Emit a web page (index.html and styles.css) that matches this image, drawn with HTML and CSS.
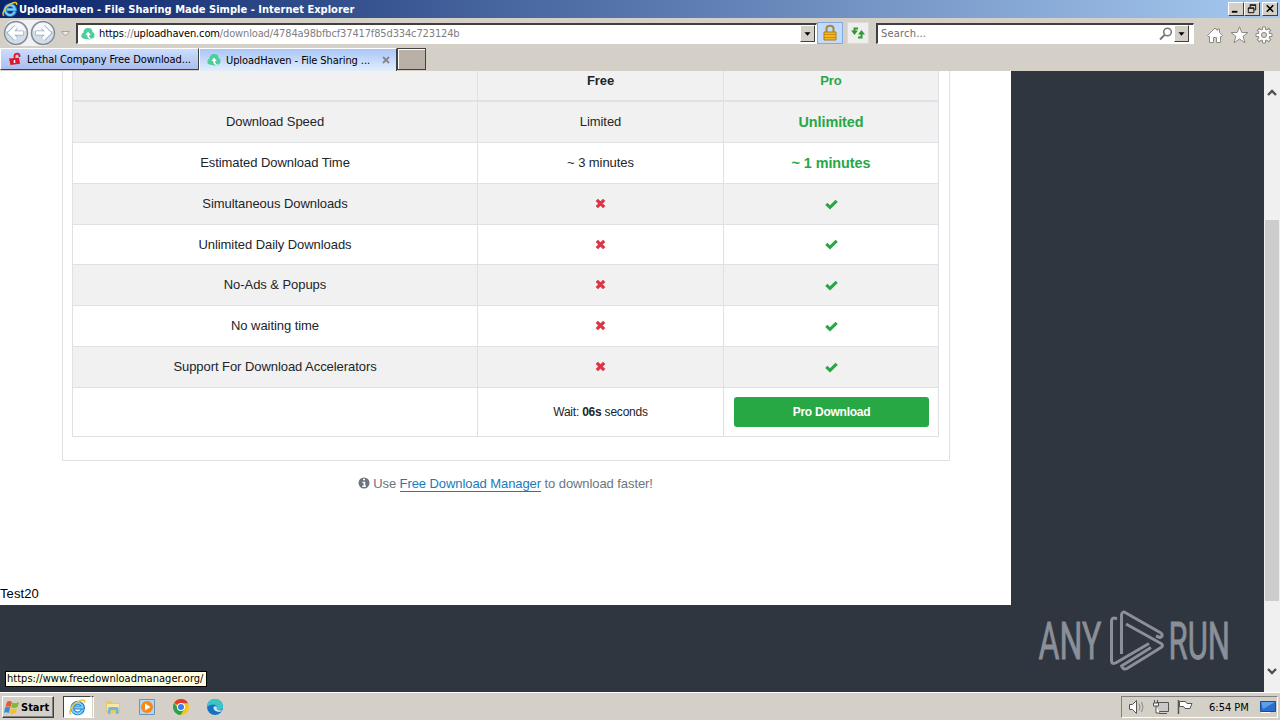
FILE: index.html
```html
<!DOCTYPE html>
<html lang="en">
<head>
    <meta charset="UTF-8">
    <title>UploadHaven - File Sharing Made Simple</title>
    <link rel="stylesheet" href="styles.css">
</head>
<body>
    <!-- shared icons -->
    <svg class="defs" width="0" height="0">
        <symbol id="ie" viewBox="0 0 16 16">
            <path d="M13 10.500A5 5 0 1 1 13.200 8.500H5" fill="none" stroke="#2580cc" stroke-width="3.6"/>
            <path d="M12.800 10.600A5 5 0 1 1 13 8.500H5" fill="none" stroke="#7fd0f8" stroke-width="1.8"/>
            <path d="M2.200 14.600C-1 14 2.500 6 8 3.200C12 .8 15.400.6 14.600 4" fill="none" stroke="#f2c230" stroke-width="1.500"/>
        </symbol>
        <symbol id="haven" viewBox="0 0 14 14">
            <path d="M1 11C-.5 8 1 6 2.500 5.500C2.500 2 5 .5 7.500 1C10.500 1 11.500 3 11.500 5C14 6 14 9.500 12.500 11L9 12.500L4 12Z" fill="#4ccf9c"/>
            <path d="M7 4.500L4.500 8H6.200C6.200 11 8 12.600 11 12C8.800 11 8.200 10 8.200 8H9.800Z" fill="#fff"/>
        </symbol>
        <symbol id="times" viewBox="0 0 11 11">
            <path d="M1.800 1.800L9.200 9.200M9.200 1.800L1.800 9.200" stroke="#dc3545" stroke-width="3.200" fill="none"/>
        </symbol>
        <symbol id="check" viewBox="0 0 13 11">
            <path d="M1.300 4.800L5 8.300L11.700 1.800" stroke="#28a745" stroke-width="3.100" fill="none"/>
        </symbol>
    </svg>

    <div class="titlebar">
        <svg class="title-icon"><use href="#ie"/></svg>
        <span class="title-text">UploadHaven - File Sharing Made Simple - Internet Explorer</span>
        <div class="window-buttons">
            <svg class="win-btn" viewBox="0 0 15 13"><path d="M3 9.500h6" stroke="#000" stroke-width="2"/></svg>
            <svg class="win-btn" viewBox="0 0 15 13"><path d="M5.500 5V2.500h6v5H10M5 2h7M3.500 5.500h6v5h-6zM3 5.500h7" stroke="#000" fill="none"/></svg>
            <svg class="win-btn close" viewBox="0 0 15 13"><path d="M4 2.500l7 7M11 2.500l-7 7" stroke="#000" stroke-width="1.700"/></svg>
        </div>
    </div>

    <div class="toolbar">
        <svg class="nav" viewBox="0 0 76 30">
            <path d="M15 2H43C59 2 59 28 43 28H15C0 28 0 2 15 2Z" fill="#f1f2f4"/>
            <g fill="#d3dde8" stroke="#848c96" stroke-width="1.500">
                <circle cx="16" cy="15" r="11.500"/>
                <circle cx="43" cy="15" r="11.500"/>
            </g>
            <path d="M6 13C8 2 24 2 26 13ZM33 13C35 2 51 2 53 13Z" fill="#f5f8fb"/>
            <path d="M23.500 15H10M16 9L10 15L16 21M35.500 15H49M43 9L49 15L43 21" stroke="#9aa8b8" stroke-width="5" fill="none"/>
            <path d="M23 15H10M16 9L10 15L16 21M36 15H49M43 9L49 15L43 21" stroke="#fff" stroke-width="3.400" fill="none"/>
            <path d="M61.500 13.500h8l-4 4.500z" fill="#ece9e4" stroke="#a9a49c"/>
        </svg>
        <div class="address">
            <svg class="site-icon"><use href="#haven"/></svg>
            <span class="url"><span class="dark">https</span>://<span class="dark">uploadhaven.com</span>/download/4784a98bfbcf37417f85d334c723124b</span>
            <svg class="drop" viewBox="0 0 15 17"><path d="M4 7h7l-3.500 4z"/></svg>
        </div>
        <div class="tool lock">
            <svg viewBox="0 0 16 18">
                <path d="M4.500 8V4.500C4.500 .8 11.500.8 11.500 4.500V8" fill="none" stroke="#a58a3c" stroke-width="2"/>
                <path d="M2 8h12v8H2z" fill="#f2b91e" stroke="#b07a10"/>
                <path d="M2 10.500h12M2 13.500h12" stroke="#ca8d14"/>
            </svg>
        </div>
        <div class="tool refresh">
            <svg viewBox="0 0 16 16">
                <path d="M8 3.500H4.500V7M8 12.500h3.500V9" fill="none" stroke="#2f9a35" stroke-width="2"/>
                <path d="M1 5.500h7l-3.500 4.500zM8 9.500h7L11.500 5z" fill="#2f9a35"/>
            </svg>
        </div>
        <div class="search">
            <span class="search-text">Search...</span>
            <svg class="lens" viewBox="0 0 14 14"><circle cx="8.500" cy="5" r="3.800" fill="none" stroke="#777" stroke-width="1.500"/><path d="M5.500 8L1 12.500" stroke="#777" stroke-width="2"/></svg>
            <svg class="drop" viewBox="0 0 15 17"><path d="M4 7h7l-3.500 4z"/></svg>
        </div>
        <svg class="commands" viewBox="0 0 68 20">
            <g fill="#fff" stroke="#8d8a86">
                <path d="M1.500 10.500L9 3l2.500 2.500V4h2v3.500l3 3l-1.500 1.500l-.5-.5V17.500H10.500V12.500H7.500V17.500H3.500V11.500L3 12Z"/>
                <path d="M33.500 1.800L35.800 7.500H42L37.100 11.300L39 17.700L33.500 14L28 17.700L29.900 11.300L25 7.500H31.200Z"/>
                <path d="M56.500 2h3v16h-3zM50 8.500h16v3H50z"/>
                <path d="M56.500 2h3v16h-3zM50 8.500h16v3H50z" transform="rotate(45 58 10)"/>
                <circle cx="58" cy="10" r="5.800"/>
                <path d="M57 3h2v14h-2zM51 9h14v2H51z" stroke="none"/>
                <path d="M57 3h2v14h-2zM51 9h14v2H51z" stroke="none" transform="rotate(45 58 10)"/>
                <circle cx="58" cy="10" r="2.600" fill="#d4d0c8"/>
            </g>
        </svg>
    </div>

    <div class="tabs">
        <div class="tab">
            <svg class="tab-icon" viewBox="0 0 14 14"><path d="M6.500 7V4C6.500 .8 11.500.8 11.500 4V5" fill="none" stroke="#e0182c" stroke-width="1.800"/><path d="M1 6.500l10-.8l1 6l-9.500 1.300z" fill="#e0182c"/><path d="M6.500 8v3" stroke="#fff" stroke-width="1.500"/></svg>
            <span class="tab-text">Lethal Company Free Download...</span>
        </div>
        <div class="tab active">
            <svg class="tab-icon"><use href="#haven"/></svg>
            <span class="tab-text">UploadHaven - File Sharing ...</span>
            <svg class="tab-close" viewBox="0 0 8 8"><path d="M1 1l6 6M7 1L1 7" stroke="#85858f" stroke-width="1.800"/></svg>
        </div>
        <div class="new-tab"></div>
    </div>

    <div class="viewport">
        <div class="page">
            <div class="content">
                <div class="card">
                    <table class="plans">
                        <colgroup><col class="col-name"><col class="col-free"><col class="col-pro"></colgroup>
                        <tr class="head"><th></th><th>Free</th><th class="green">Pro</th></tr>
                        <tr class="odd"><td>Download Speed</td><td>Limited</td><td class="pro">Unlimited</td></tr>
                        <tr><td>Estimated Download Time</td><td>~ 3 minutes</td><td class="pro">~ 1 minutes</td></tr>
                        <tr class="odd"><td>Simultaneous Downloads</td><td><svg class="times"><use href="#times"/></svg></td><td><svg class="check"><use href="#check"/></svg></td></tr>
                        <tr class="short"><td>Unlimited Daily Downloads</td><td><svg class="times"><use href="#times"/></svg></td><td><svg class="check"><use href="#check"/></svg></td></tr>
                        <tr class="odd"><td>No-Ads &amp; Popups</td><td><svg class="times"><use href="#times"/></svg></td><td><svg class="check"><use href="#check"/></svg></td></tr>
                        <tr><td>No waiting time</td><td><svg class="times"><use href="#times"/></svg></td><td><svg class="check"><use href="#check"/></svg></td></tr>
                        <tr class="odd"><td>Support For Download Accelerators</td><td><svg class="times"><use href="#times"/></svg></td><td><svg class="check"><use href="#check"/></svg></td></tr>
                        <tr class="last"><td></td><td class="wait">Wait: <b>06s</b> seconds</td><td><a class="btn">Pro Download</a></td></tr>
                    </table>
                </div>
                <p class="hint">
                    <svg class="info" viewBox="0 0 12 12"><circle cx="6" cy="6" r="5.500" fill="#6c757d"/><path d="M5 2.500h2M4.500 5.500H6.500V9M4.300 9.300h3.600" stroke="#fff" stroke-width="1.500" fill="none"/></svg>
                    <span>Use <a>Free Download Manager</a> to download faster!</span>
                </p>
                <div class="test">Test20</div>
            </div>
            <svg class="watermark" viewBox="0 0 196 66">
                <g class="mark-text">
                    <text transform="translate(.500 51.500) scale(.63 1)">ANY</text>
                    <text transform="translate(130.500 51.500) scale(.61 1)">RUN</text>
                </g>
                <g fill="none" stroke="#8b8f97" stroke-width="3" stroke-linejoin="round">
                    <path d="M79 12Q73.500 9 73.500 15V54Q74 58 78.500 55.500L111 36.500"/>
                    <path d="M83.500 47V8Q84 3.500 88 6L123 26Q126 29 122 30.500L118 29"/>
                    <path d="M88 17L123 36.500Q126 38.500 123 40.500L89 61.500Q85.500 63.500 83.500 59L113 40.500"/>
                </g>
            </svg>
            <div class="status">https://www.freedownloadmanager.org/</div>
        </div>
        <div class="scrollbar">
            <svg class="arrow" viewBox="0 0 16 16"><path d="M4 10l4-4l4 4" fill="none" stroke="#505050" stroke-width="2.400"/></svg>
            <div class="thumb"></div>
            <svg class="arrow" viewBox="0 0 16 16"><path d="M4 6l4 4l4-4" fill="none" stroke="#505050" stroke-width="2.400"/></svg>
        </div>
    </div>

    <div class="taskbar">
        <div class="start">
            <svg class="flag" viewBox="0 0 16 15"><path d="M3 2Q5 0 8 2L6.500 7Q4 5.500 1.500 7Z" fill="#e8592b"/><path d="M8.500 2.500Q12 4 15 2L13.500 7Q10.500 9 7 7.300Z" fill="#7dbb3c"/><path d="M1.200 7.500Q4 6 6.200 7.500L4.800 13Q2 11.500 0 13Z" fill="#3c8ad8"/><path d="M6.800 8Q10 10 13 8L11.700 13Q9 15 5.300 13.500Z" fill="#f4c22c"/></svg>
            <span class="start-text">Start</span>
        </div>
        <div class="task-active"><svg><use href="#ie"/></svg></div>
        <div class="grip"></div>
        <svg class="task folder" viewBox="0 0 16 16"><path d="M1 2h6l1 2h7v10H1z" fill="#e6c968"/><path d="M2 5h12v6H2z" fill="#f8e9a6"/><path d="M3 15V9.500Q3 8 4.500 8H12Q13.500 8 13.500 9.500V15H11V11H5.500V15z" fill="#72b7e3"/></svg>
        <svg class="task player" viewBox="0 0 16 16"><path d="M.5.5h15v15H.5z" fill="#b5d5ef" stroke="#6795bd"/><circle cx="8" cy="8" r="6" fill="#f28a1c"/><path d="M6 4.500v7l5.500-3.500z" fill="#fff"/></svg>
        <svg class="task chrome" viewBox="0 0 16 16"><circle cx="8" cy="8" r="8" fill="#f7c51e"/><path d="M8 8L1.100 4A8 8 0 0 1 15 4.200H8z" fill="#e23b2e"/><path d="M1.100 4A8 8 0 0 0 7.500 16L11.500 10L8 8H4z" fill="#2aa24c"/><circle cx="8" cy="8" r="4" fill="#fff"/><circle cx="8" cy="8" r="3" fill="#3b7de8"/></svg>
        <svg class="task edge" viewBox="0 0 16 16"><circle cx="8" cy="8" r="8" fill="#1673c4"/><path d="M0 8A8 8 0 0 1 16 7.500Q16 11 11.500 11Q9 10.500 10 8.500Q9.500 5.500 6 5.500Q2 5.500 0 8z" fill="#3bc5c5"/><path d="M6.500 8Q6 12.500 13 13L15.500 11Q12.500 12 10.500 10.800Q9 10 10 8.500Q8.500 6.500 6.500 8z" fill="#d4e8f0"/></svg>
        <div class="tray">
            <svg class="tray-icons" viewBox="0 0 72 18">
                <g fill="#fff" stroke="#555">
                    <path d="M1.500 6.500h3l4-4v13l-4-4h-3z"/>
                    <path d="M11 5.500Q13 9 11 12.500M13.500 4Q16.500 9 13.500 14" fill="none" stroke="#888"/>
                    <path d="M28.500 4.500h12v9h-12zM31 15.500h8" fill="#c8c8c8"/>
                    <path d="M26.500 2v3M29.500 2v3M25.500 5h5v3h-5zM28 8v7h4" />
                    <path d="M50.500 2v14" stroke-width="1.500"/><path d="M51.500 3.500h6l1.500 2h5l-2 5h-5l-1.500-2h-4z"/>
                </g>
            </svg>
            <span class="clock">6:54 PM</span>
            <svg class="desktop" viewBox="0 0 16 14"><path d="M.5 1.500h15v10H.5z" fill="#2a6fcd" stroke="#1e4a91"/><path d="M1 2h14L3 9z" fill="#5ba0ea"/><path d="M1 12.500h9" stroke="#fff"/></svg>
        </div>
    </div>
</body>
</html>
```

FILE: styles.css
```css
* {
    box-sizing: border-box;
}
body {
    margin: 0;
    width: 1280px;
    height: 720px;
    overflow: hidden;
    display: flex;
    flex-direction: column;
    background: #d4d0c8;
    font-family: "DejaVu Sans Condensed", "DejaVu Sans", sans-serif;
    font-size: 11px;
    color: #000;
}
svg {
    display: block;
    flex: none;
}
.defs {
    position: absolute;
}
span {
    white-space: nowrap;
}

/* title bar */
.titlebar {
    flex: none;
    height: 18px;
    display: flex;
    align-items: center;
    padding: 0 2px;
    background: linear-gradient(to right, #0a246a, #a6caf0);
}
.title-icon {
    width: 16px;
    height: 16px;
}
.title-text {
    margin-left: 1px;
    color: #fff;
    font-weight: bold;
    letter-spacing: 0.02px;
}
.window-buttons {
    display: flex;
    margin-left: auto;
}
.win-btn {
    width: 16px;
    height: 14px;
    background: #d4d0c8;
    border: 1px solid;
    border-color: #fff #404040 #404040 #fff;
}
.win-btn.close {
    margin-left: 2px;
}

/* address row */
.toolbar {
    flex: none;
    height: 30px;
    display: flex;
    align-items: center;
}
.nav {
    width: 76px;
    height: 30px;
}
.address,
.search {
    height: 21px;
    display: flex;
    align-items: center;
    background: #fff;
    border: 1px solid;
    border-color: #404040 #fff #fff #404040;
    border-width: 2px 1px 1px 2px;
}
.address {
    width: 741px;
}
.site-icon {
    width: 14px;
    height: 14px;
    margin-left: 3px;
}
.url {
    margin-left: 4px;
    color: #808080;
    letter-spacing: -0.14px;
}
.dark {
    color: #000;
}
.drop {
    width: 15px;
    height: 17px;
    margin-left: auto;
    margin-right: 1px;
    background: #d4d0c8;
    border: 1px solid;
    border-color: #fff #404040 #404040 #fff;
}
.tool {
    height: 22px;
    display: flex;
    align-items: center;
    justify-content: center;
    border: 1px solid #dedbd4;
    background: #eeefed;
}
.tool svg {
    width: 16px;
    height: 18px;
}
.lock {
    width: 26px;
    background: #c3dafa;
    border-color: #7eabe8;
}
.refresh {
    width: 22px;
    margin-left: 4px;
}
.search {
    width: 318px;
    margin-left: 7px;
}
.search-text {
    margin-left: 3px;
    color: #6d6d6d;
    letter-spacing: 0.2px;
}
.lens {
    width: 14px;
    height: 14px;
    margin-left: auto;
}
.search .drop {
    margin-left: 1px;
    margin-right: 4px;
}
.commands {
    width: 68px;
    height: 20px;
    margin-left: 12px;
    margin-top: 4px;
}

/* tabs */
.tabs {
    flex: none;
    height: 23px;
    display: flex;
}
.tab {
    width: 199px;
    height: 22px;
    display: flex;
    align-items: center;
    padding-left: 7px;
    background: linear-gradient(#cdddfd, #aabff0);
    border: 1px solid;
    border-color: #fff #404040 #404040 #fff;
}
.tab.active {
    width: 198px;
    height: 23px;
    background: linear-gradient(#a9c6f8, #e2eefc);
    border-bottom: 0;
}
.tab-icon {
    width: 14px;
    height: 14px;
}
.tab-text {
    margin-left: 5px;
    letter-spacing: -0.08px;
}
.tab-close {
    width: 8px;
    height: 8px;
    margin-left: auto;
    margin-right: 6px;
}
.new-tab {
    width: 29px;
    height: 22px;
    background: #b9b1a8;
    border: 1px solid #404040;
    box-shadow: inset 1px 1px #fff;
}

/* page */
.viewport {
    flex: none;
    height: 621px;
    display: flex;
}
.page {
    position: relative;
    width: 1264px;
    background: #2f3640;
    font-family: "Liberation Sans", Arial, sans-serif;
    font-size: 13px;
}
.content {
    width: 1011px;
    height: 534px;
    overflow: hidden;
    background: #fff;
}
.card {
    width: 888px;
    height: 390px;
    margin-left: 62px;
    padding-left: 9px;
    overflow: hidden;
    border: 1px solid #dee2e6;
    border-top: 0;
}
.plans {
    width: 867px;
    margin-top: -10px;
    table-layout: fixed;
    border-spacing: 0;
    border-left: 1px solid #dee2e6;
    color: #212529;
    letter-spacing: -0.06px;
}
.col-name {
    width: 405px;
}
.col-free {
    width: 246px;
}
.col-pro {
    width: 215px;
}
.plans td,
.plans th {
    height: 41px;
    padding: 0;
    line-height: 18px;
    text-align: center;
    vertical-align: middle;
    border-right: 1px solid #dee2e6;
    border-bottom: 1px solid #dee2e6;
}
.plans th {
    border-bottom-width: 2px;
}
.head,
.odd {
    background: #f1f1f1;
}
.plans .short td {
    height: 40px;
}
.plans .last td {
    height: 49px;
}
.green,
.pro {
    color: #28a745;
}
.pro {
    font-size: 14.4px;
    font-weight: bold;
}
.times {
    width: 11px;
    height: 11px;
    margin: 0 auto 1px;
}
.check {
    width: 13px;
    height: 11px;
    margin: 0 auto;
}
.wait {
    font-size: 12px;
    letter-spacing: -0.22px;
}
.btn {
    display: block;
    height: 30px;
    margin: 0 9px 0 10px;
    line-height: 30px;
    border-radius: 3px;
    background: #28a745;
    color: #fff;
    font-size: 12px;
    font-weight: bold;
    letter-spacing: -0.25px;
}
.hint {
    display: flex;
    justify-content: center;
    align-items: center;
    gap: 3px;
    height: 18px;
    margin: 13px 0 0;
    color: #6c757d;
    letter-spacing: -0.08px;
}
.hint a {
    color: #1a7bb9;
    border-bottom: 1px solid #1a7bb9;
}
.info {
    width: 12px;
    height: 12px;
}
.test {
    margin-top: 93px;
    line-height: 18px;
    letter-spacing: 0.1px;
}
.watermark {
    position: absolute;
    left: 1038px;
    top: 536px;
    width: 196px;
    height: 66px;
}
.mark-text {
    font-family: Roboto, sans-serif;
    font-size: 51px;
    fill: #8b8f97;
    stroke: #8b8f97;
    stroke-width: 0.8px;
}
.status {
    position: absolute;
    left: 5px;
    top: 600px;
    width: 202px;
    height: 16px;
    padding-left: 1px;
    line-height: 14px;
    white-space: nowrap;
    background: #ffffe1;
    border: 1px solid #000;
    font-family: "DejaVu Sans Condensed", "DejaVu Sans", sans-serif;
    font-size: 11px;
    letter-spacing: 0.03px;
}
.scrollbar {
    width: 16px;
    padding: 14px 0 13px;
    display: flex;
    flex-direction: column;
    background: #f0f0f0;
}
.arrow {
    width: 16px;
    height: 16px;
}
.thumb {
    width: 14px;
    height: 381px;
    margin: 119px 1px 62px;
    background: #cdcdcd;
}

/* taskbar */
.taskbar {
    flex: none;
    height: 28px;
    display: flex;
    align-items: center;
    padding: 1px 2px 0;
    border-top: 1px solid #fff;
}
.start {
    width: 52px;
    height: 22px;
    display: flex;
    align-items: center;
    border: 1px solid;
    border-color: #fff #404040 #404040 #fff;
    box-shadow: inset -1px -1px #808080;
}
.flag {
    width: 16px;
    height: 15px;
    margin-left: 1px;
}
.start-text {
    margin-left: 1px;
    font-weight: bold;
}
.task-active {
    width: 28px;
    height: 22px;
    margin-left: 9px;
    padding: 1px 5px;
    background: #fff;
    border: 1px solid;
    border-color: #404040 #fff #fff #404040;
}
.task-active svg {
    width: 17px;
    height: 18px;
}
.grip {
    width: 3px;
    height: 22px;
    border: 1px solid #fff;
    border-top-color: #404040;
}
.task {
    width: 16px;
    height: 16px;
}
.folder {
    margin-left: 11px;
}
.player,
.chrome,
.edge {
    margin-left: 18px;
}
.tray {
    width: 157px;
    height: 22px;
    margin-left: auto;
    display: flex;
    align-items: center;
    padding-left: 6px;
    border: 1px solid;
    border-color: #808080 #fff #fff #808080;
}
.tray-icons {
    width: 72px;
    height: 18px;
}
.clock {
    margin-left: 9px;
}
.desktop {
    width: 16px;
    height: 14px;
    margin-left: auto;
    margin-right: 1px;
}
```
